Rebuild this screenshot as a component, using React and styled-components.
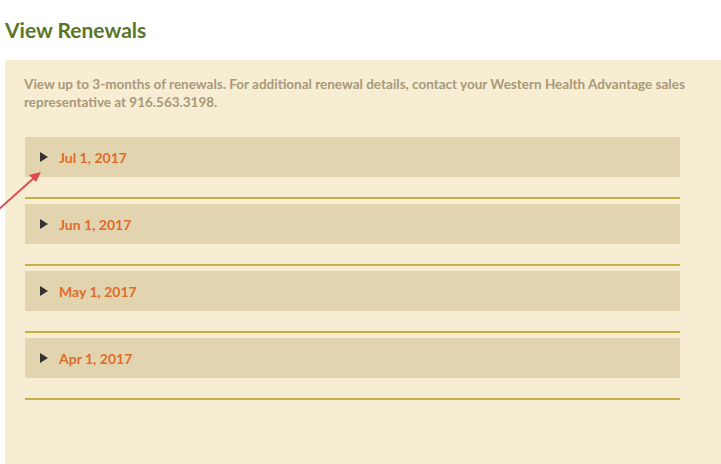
import React from 'react';
import styled, { createGlobalStyle } from 'styled-components';

const GlobalStyle = createGlobalStyle`
  html, body {
    margin: 0;
    padding: 0;
    background: #fff;
    font-family: Lato, "Open Sans", sans-serif;
  }
`;

const Page = styled.div`
  position: relative;
  min-height: 464px;
  display: flex;
  flex-direction: column;
`;

const Title = styled.h1`
  margin: 0;
  padding: 17px 0 0 5px;
  height: 60px;
  box-sizing: border-box;
  font-size: 21px;
  font-weight: 700;
  color: #5b7627;
  line-height: 26px;
`;

const Panel = styled.div`
  flex: 1;
  margin-left: 5px;
  background: #f7edd3;
  padding: 15px 25px 0 19px;
  box-sizing: border-box;
`;

const Intro = styled.p`
  margin: 0 0 26px;
  font-size: 13.5px;
  font-weight: 700;
  line-height: 18px;
  color: #a8997a;
`;

const List = styled.div`
  display: flex;
  flex-direction: column;
  gap: 5px;
  margin: 0 16px 0 1px;
`;

const Item = styled.div`
  padding-bottom: 20px;
  border-bottom: 2px solid #c7ae45;
`;

const Header = styled.div`
  height: 40px;
  display: flex;
  align-items: center;
  gap: 11px;
  padding-left: 15px;
  background: #e3d4b0;
  cursor: pointer;
`;

const Caret = styled.span`
  width: 0;
  height: 0;
  border-top: 5px solid transparent;
  border-bottom: 5px solid transparent;
  border-left: 8px solid #333;
`;

const DateLabel = styled.span`
  font-size: 14px;
  font-weight: 700;
  color: #de6c29;
`;

const Pointer = styled.svg`
  position: absolute;
  left: 0;
  top: 165px;
  width: 48px;
  height: 50px;
  pointer-events: none;
`;

const dates = ['Jul 1, 2017', 'Jun 1, 2017', 'May 1, 2017', 'Apr 1, 2017'];

export default function App() {
  return (
    <>
      <GlobalStyle />
      <Page>
        <Title>View Renewals</Title>
        <Panel>
          <Intro>
            View up to 3-months of renewals. For additional renewal details, contact your Western Health Advantage sales representative at 916.563.3198.
          </Intro>
          <List>
            {dates.map(d => (
              <Item key={d}>
                <Header>
                  <Caret />
                  <DateLabel>{d}</DateLabel>
                </Header>
              </Item>
            ))}
          </List>
        </Panel>
        <Pointer viewBox="0 0 48 50">
          <line x1="-2" y1="45" x2="35" y2="12" stroke="#e04b4b" strokeWidth="2" strokeLinecap="round" />
          <polygon points="41,7 29,10 36,17" fill="#e04b4b" />
        </Pointer>
      </Page>
    </>
  );
}
